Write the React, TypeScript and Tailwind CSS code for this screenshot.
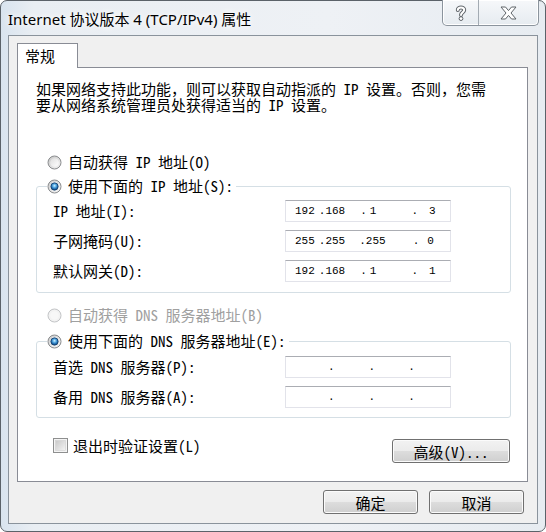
import React from "react";

const CJK = "font-['Noto_Sans_Mono_CJK_SC','Noto_Sans_CJK_SC',sans-serif]";
const MONO = "font-['Liberation_Mono',monospace]";

function Radio({ state }: { state: "off" | "on" | "disabled" }) {
  if (state === "on") {
    return (
      <svg width="15" height="15" viewBox="0 0 15 15" className="shrink-0">
        <defs>
          <linearGradient id="ronRing" x1="0" y1="0" x2="1" y2="1">
            <stop offset="0" stopColor="#c9c9c9" />
            <stop offset="1" stopColor="#fbfbfb" />
          </linearGradient>
          <radialGradient id="ronDot" cx="0.5" cy="0.4" r="0.6">
            <stop offset="0" stopColor="#d6f2ff" />
            <stop offset="0.35" stopColor="#5fb2e8" />
            <stop offset="0.75" stopColor="#1a64a8" />
            <stop offset="1" stopColor="#0d3a6a" />
          </radialGradient>
        </defs>
        <circle cx="7.5" cy="7.5" r="6.5" fill="url(#ronRing)" stroke="#8a8c8e" />
        <circle cx="7.5" cy="7.5" r="4.4" fill="#fff" />
        <circle cx="7.5" cy="7.5" r="3.7" fill="url(#ronDot)" stroke="#173f69" strokeWidth="0.8" />
      </svg>
    );
  }
  if (state === "disabled") {
    return (
      <svg width="15" height="15" viewBox="0 0 15 15" className="shrink-0">
        <circle cx="7.5" cy="7.5" r="6.5" fill="#f2f2f2" stroke="#c2c4c6" />
        <circle cx="7.5" cy="7.5" r="4.2" fill="#f7f7f7" />
      </svg>
    );
  }
  return (
    <svg width="15" height="15" viewBox="0 0 15 15" className="shrink-0">
      <defs>
        <linearGradient id="roffRing" x1="0" y1="0" x2="1" y2="1">
          <stop offset="0" stopColor="#c5c5c5" />
          <stop offset="1" stopColor="#f6f6f6" />
        </linearGradient>
        <linearGradient id="roffIn" x1="0" y1="0" x2="1" y2="1">
          <stop offset="0" stopColor="#dedede" />
          <stop offset="1" stopColor="#ffffff" />
        </linearGradient>
      </defs>
      <circle cx="7.5" cy="7.5" r="6.5" fill="url(#roffRing)" stroke="#8a8c8e" />
      <circle cx="7.5" cy="7.5" r="4.3" fill="url(#roffIn)" />
    </svg>
  );
}

function Checkbox() {
  return (
    <svg width="15" height="15" viewBox="0 0 15 15" className="shrink-0">
      <defs>
        <linearGradient id="cbIn" x1="0" y1="0" x2="1" y2="1">
          <stop offset="0" stopColor="#c8c8c8" />
          <stop offset="1" stopColor="#f4f4f4" />
        </linearGradient>
      </defs>
      <rect x="0.5" y="0.5" width="14" height="14" fill="#f4f4f4" stroke="#8e8f8f" />
      <rect x="2.5" y="2.5" width="10" height="10" fill="url(#cbIn)" stroke="#d0d0d0" strokeWidth="0.6" />
    </svg>
  );
}

function WinButton({ label, w }: { label: string; w: string }) {
  return (
    <div
      className={`${w} h-[24px] rounded-[3px] border border-[#707070] bg-[linear-gradient(#f2f2f2_0%,#ebebeb_50%,#dddddd_50%,#cfcfcf_100%)] shadow-[inset_0_0_0_1px_#fbfbfb] flex items-center justify-center text-[15px] leading-[15px] text-black ${CJK}`}
    >
      {label}
    </div>
  );
}

function IpBox({ children }: { children?: React.ReactNode }) {
  return (
    <div
      className={`w-[166px] h-[22px] border border-[#e2e3ea] border-t-[#abadb3] bg-white flex items-center pt-[1px] text-[11px] leading-[13px] text-black whitespace-pre ${MONO}`}
    >
      {children}
    </div>
  );
}

function EmptyIp() {
  return (
    <IpBox>
      <span className="ml-[42px]">.</span>
      <span className="ml-[34px]">.</span>
      <span className="ml-[33px]">.</span>
    </IpBox>
  );
}

function Row({ label, children }: { label: string; children: React.ReactNode }) {
  return (
    <div className="flex items-center h-[22px]">
      <div className="w-[232px] whitespace-nowrap leading-[16px]">{label}</div>
      {children}
    </div>
  );
}

function QuestionGlyph() {
  return (
    <svg width="12" height="16" viewBox="0 0 12 16">
      <path d="M2.8 5 C2.8 1.6 9.2 1.6 9.2 5 C9.2 7.4 6 7.4 6 10" fill="none" stroke="#5f6469" strokeWidth="4" strokeLinecap="round" />
      <path d="M2.8 5 C2.8 1.6 9.2 1.6 9.2 5 C9.2 7.4 6 7.4 6 10" fill="none" stroke="#ffffff" strokeWidth="2" strokeLinecap="round" />
      <circle cx="6" cy="13.6" r="1.9" fill="#ffffff" stroke="#5f6469" />
    </svg>
  );
}

function CloseGlyph() {
  return (
    <svg width="17" height="14" viewBox="0 0 17 14">
      <polygon
        points="1,1 5.5,1 8.5,4.6 11.5,1 16,1 11,7 16,13 11.5,13 8.5,9.4 5.5,13 1,13 6,7"
        fill="#ffffff"
        stroke="#5f6469"
        strokeLinejoin="round"
      />
    </svg>
  );
}

export default function App() {
  return (
    <div className="w-[546px] h-[532px] overflow-hidden bg-white">
      <div className="w-[546px] h-[532px] rounded-[7px] border border-[#5b6269] bg-[linear-gradient(90deg,#d9e4ef_0%,#e9eef3_6%,#eef1f5_60%,#e7ecf1_100%)] flex flex-col">
        {/* Title bar */}
        <div className="h-[34px] flex items-start justify-between shrink-0">
          <div className="pl-[7px] pt-[8px] text-[15px] leading-[20px] text-black whitespace-nowrap font-['Noto_Sans','Noto_Sans_CJK_SC',sans-serif] [text-shadow:0_0_6px_#ffffff,0_0_10px_#ffffff]">
            Internet 协议版本 4 (TCP/IPv4) 属性
          </div>
          <div className="-mt-px mr-[6px] h-[26px] flex rounded-b-[5px] border border-t-0 border-[#8b949d] bg-[linear-gradient(#f6f8fa,#e6ebf0)] shadow-[inset_0_0_0_1px_#ffffff]">
            <div className="w-[35px] flex items-center justify-center">
              <QuestionGlyph />
            </div>
            <div className="w-[60px] border-l border-[#a3abb3] flex items-center justify-center">
              <CloseGlyph />
            </div>
          </div>
        </div>

        {/* Client area */}
        <div className={`mx-[7px] h-[489px] border border-[#8a939c] bg-[#f0f0f0] flex flex-col text-[15px] text-black ${CJK}`}>
          {/* Tab */}
          <div className="ml-[8px] mt-[7px] w-[61px] h-[25px] -mb-px relative z-10 border border-b-0 border-[#898c95] bg-white flex items-center pl-[7px] leading-[16px]">
            常规
          </div>

          {/* Tab panel */}
          <div className="ml-[8px] w-[511px] h-[415px] border border-[#898c95] bg-white flex flex-col">
            <div className="mt-[13px] pl-[18px] leading-[16px] whitespace-nowrap">
              <div>如果网络支持此功能，则可以获取自动指派的 IP 设置。否则，您需</div>
              <div>要从网络系统管理员处获得适当的 IP 设置。</div>
            </div>

            <div className="mt-[41px] pl-[29px] h-[16px] flex items-center gap-[6px] leading-[16px] whitespace-nowrap">
              <Radio state="off" />
              <span>自动获得 IP 地址(O)</span>
            </div>

            <fieldset className="mt-[8px] ml-[18px] w-[475px] border border-[#d5dfe5] rounded-[3px]">
              <legend className="ml-[10px] pr-[3px]">
                <span className="h-[16px] flex items-center gap-[6px] leading-[16px] whitespace-nowrap">
                  <Radio state="on" />
                  <span>使用下面的 IP 地址(S):</span>
                </span>
              </legend>
              <div className="pl-[16px] pt-[6px] pb-[10px] flex flex-col gap-[8px]">
                <Row label="IP 地址(I):">
                  <IpBox>
                    <span className="ml-[9px]">192</span>
                    <span className="ml-[4px]">.168</span>
                    <span className="ml-[15px]">.</span>
                    <span className="ml-[3px]">1</span>
                    <span className="ml-[35px]">.</span>
                    <span className="ml-[11px]">3</span>
                  </IpBox>
                </Row>
                <Row label="子网掩码(U):">
                  <IpBox>
                    <span className="ml-[9px]">255</span>
                    <span className="ml-[4px]">.255</span>
                    <span className="ml-[14px]">.255</span>
                    <span className="ml-[27px]">.</span>
                    <span className="ml-[8px]">0</span>
                  </IpBox>
                </Row>
                <Row label="默认网关(D):">
                  <IpBox>
                    <span className="ml-[9px]">192</span>
                    <span className="ml-[4px]">.168</span>
                    <span className="ml-[15px]">.</span>
                    <span className="ml-[3px]">1</span>
                    <span className="ml-[35px]">.</span>
                    <span className="ml-[11px]">1</span>
                  </IpBox>
                </Row>
              </div>
            </fieldset>

            <div className="mt-[14px] pl-[29px] h-[16px] flex items-center gap-[6px] leading-[16px] whitespace-nowrap text-[#a0a0a0]">
              <Radio state="disabled" />
              <span>自动获得 DNS 服务器地址(B)</span>
            </div>

            <fieldset className="mt-[10px] ml-[18px] w-[475px] border border-[#d5dfe5] rounded-[3px]">
              <legend className="ml-[10px] pr-[3px]">
                <span className="h-[16px] flex items-center gap-[6px] leading-[16px] whitespace-nowrap">
                  <Radio state="on" />
                  <span>使用下面的 DNS 服务器地址(E):</span>
                </span>
              </legend>
              <div className="pl-[16px] pt-[7px] pb-[9px] flex flex-col gap-[8px]">
                <Row label="首选 DNS 服务器(P):">
                  <EmptyIp />
                </Row>
                <Row label="备用 DNS 服务器(A):">
                  <EmptyIp />
                </Row>
              </div>
            </fieldset>

            <div className="mt-[20px] pl-[35px] pr-[17px] flex items-start justify-between">
              <div className="h-[15px] flex items-center gap-[5px] leading-[16px] whitespace-nowrap">
                <Checkbox />
                <span>退出时验证设置(L)</span>
              </div>
              <div className="mt-[1px]">
                <WinButton label="高级(V)..." w="w-[118px]" />
              </div>
            </div>
          </div>

          {/* Bottom buttons */}
          <div className="mt-[8px] mr-[13px] flex justify-end gap-[11px]">
            <WinButton label="确定" w="w-[95px]" />
            <WinButton label="取消" w="w-[95px]" />
          </div>
        </div>
      </div>
    </div>
  );
}
